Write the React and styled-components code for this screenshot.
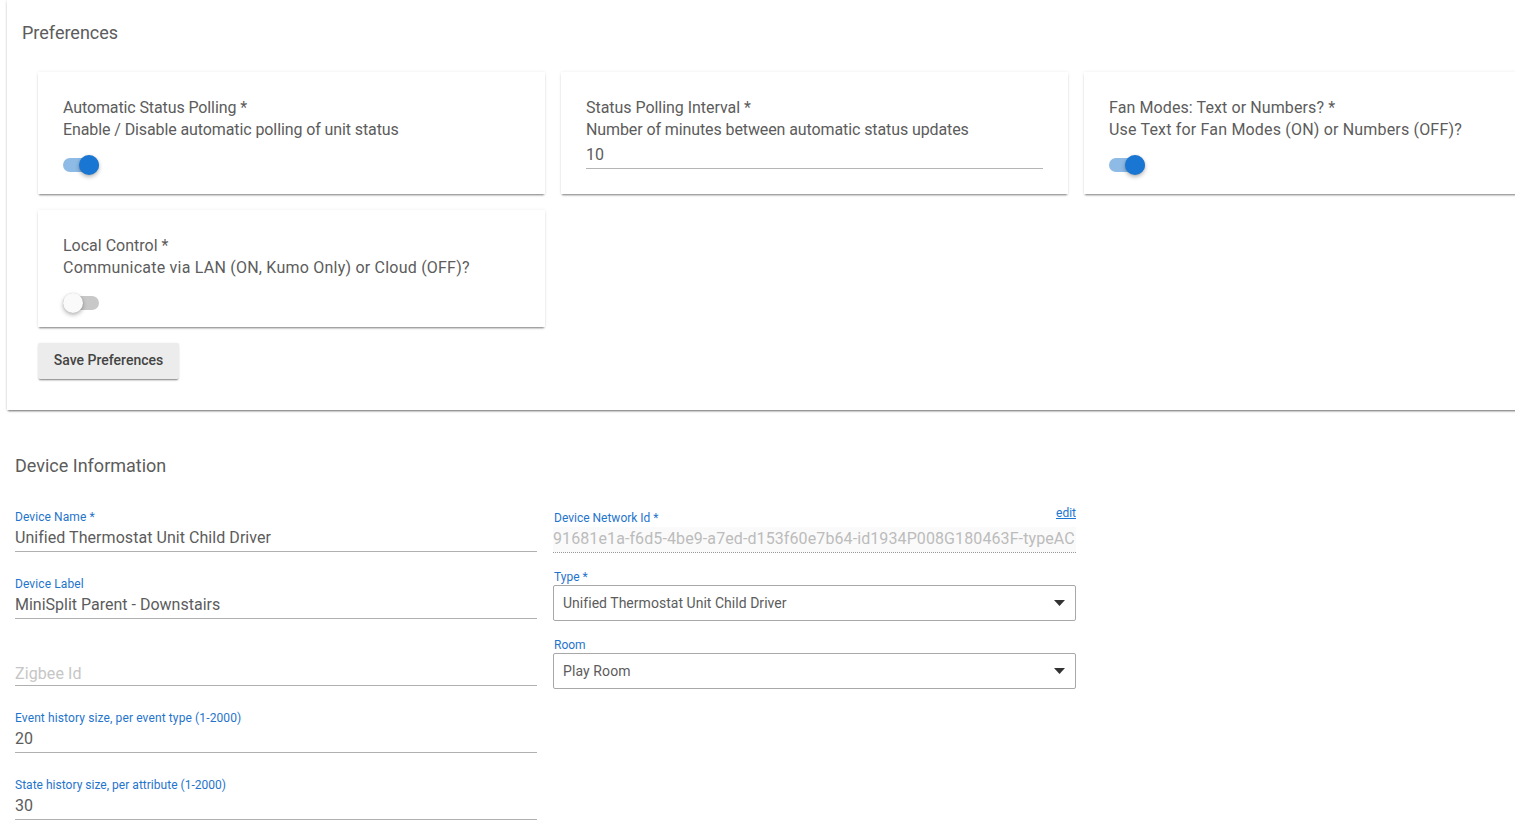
import styled, { createGlobalStyle } from 'styled-components';

const GlobalStyle = createGlobalStyle`
  html, body {
    margin: 0;
    height: 835px;
    overflow: hidden;
    background: #fff;
    font-family: Roboto, "Liberation Sans", Arial, sans-serif;
    color: #555;
  }
  * { box-sizing: border-box; }
`;

const Page = styled.div`
  width: 1515px;
  height: 835px;
  overflow: hidden;
`;

const PrefsPanel = styled.section`
  margin-left: 7px;
  width: 1520px;
  height: 410px;
  padding: 22px 0 0 15px;
  background: #fff;
  box-shadow: 0 2px 2px -1px rgba(0, 0, 0, 0.55), 0 0 3px rgba(0, 0, 0, 0.14);
`;

const PanelTitle = styled.h2`
  margin: 0;
  font-size: 18px;
  line-height: 22px;
  font-weight: 400;
  color: #5c5c5c;
`;

const PrefGrid = styled.div`
  display: grid;
  grid-template-columns: repeat(3, 507px);
  gap: 16px;
  margin: 28px 0 0 16px;
`;

const PrefCard = styled.div`
  height: ${({ $short }) => ($short ? '117px' : '122px')};
  padding: 25px 25px 0;
  background: #fff;
  box-shadow: 0 2px 2px -1px rgba(0, 0, 0, 0.5), 0 0 3px rgba(0, 0, 0, 0.08);
  font-size: 16px;
  line-height: 22px;
  color: #5c5c5c;
`;

const PrefLine = styled.div`
  height: 22px;
  white-space: nowrap;
  letter-spacing: ${({ $track }) => $track || 0}px;
`;

const SwitchTrack = styled.div`
  position: relative;
  width: 36px;
  height: 14px;
  margin-top: 17px;
  border-radius: 7px;
  background: ${({ $on }) => ($on ? '#8dbbe6' : '#c8c8c8')};
`;

const SwitchKnob = styled.div`
  position: absolute;
  top: -3px;
  left: ${({ $on }) => ($on ? '16px' : '0')};
  width: 20px;
  height: 20px;
  border-radius: 50%;
  background: ${({ $on }) => ($on ? '#1976d2' : '#fafafa')};
  box-shadow: 0 2px 4px rgba(0, 0, 0, 0.3), 0 0 1px rgba(0, 0, 0, 0.15);
`;

const IntervalValue = styled.div`
  height: 25px;
  margin-top: 3px;
  line-height: 22px;
  border-bottom: 1px solid #b5b5b5;
`;

const SaveButton = styled.button`
  display: block;
  width: 141px;
  height: 36px;
  margin: 16px 0 0 16px;
  padding: 0 0 2px;
  border: 0;
  border-radius: 2px;
  background: #ececec;
  box-shadow: 0 2px 2px -1px rgba(0, 0, 0, 0.5), 0 0 2px rgba(0, 0, 0, 0.08);
  font-family: inherit;
  font-size: 14px;
  font-weight: 500;
  color: #444;
`;

const DevicePanel = styled.section`
  padding: 45px 0 0 15px;
`;

const DeviceColumns = styled.div`
  display: grid;
  grid-template-columns: 522px 523px;
  column-gap: 16px;
  margin-top: 31px;
`;

const Column = styled.div`
  display: flex;
  flex-direction: column;
`;

const TextField = styled.div`
  height: 67px;
  padding-top: 2px;
  font-size: 16px;
`;

const FieldLabel = styled.div`
  height: ${({ $tall }) => ($tall ? '15px' : '14px')};
  padding-left: ${({ $inset }) => ($inset ? '1px' : '0')};
  font-size: 12px;
  line-height: 14px;
  color: #1f74cc;
  white-space: nowrap;
  letter-spacing: ${({ $track }) => $track || 0}px;
`;

const FieldValue = styled.div`
  height: 27px;
  padding-top: ${({ $placeholder }) => ($placeholder ? '5px' : '3px')};
  line-height: 20px;
  color: ${({ $placeholder }) => ($placeholder ? '#c6c6c6' : '#5c5c5c')};
  border-bottom: 1px solid #b0b0b0;
  white-space: nowrap;
  letter-spacing: ${({ $track }) => $track || 0}px;
`;

const NetworkField = styled.div`
  position: relative;
  height: 62px;
  padding-top: 3px;
`;

const EditLink = styled.a`
  position: absolute;
  top: -2px;
  right: 0;
  font-size: 12px;
  line-height: 14px;
  color: #1976d2;
  text-decoration: underline;
`;

const ReadOnlyValue = styled.div`
  height: 26px;
  margin-top: 2px;
  font-size: 16px;
  line-height: 24px;
  color: #bcbcbc;
  background: #fafafa;
  border-bottom: 1px dotted #9a9a9a;
  letter-spacing: 0.1px;
  white-space: nowrap;
  overflow: hidden;
`;

const SelectField = styled.div`
  height: 68px;
`;

const SelectBox = styled.div`
  display: flex;
  align-items: center;
  justify-content: space-between;
  height: 36px;
  margin-top: 1px;
  padding: 0 10px 0 9px;
  border: 1px solid #a8a8a8;
  border-radius: 2px;
  font-size: 14px;
  color: #5c5c5c;
  letter-spacing: ${({ $track }) => $track || 0}px;
`;

const Caret = styled.svg`
  width: 11px;
  height: 6px;
  fill: #333;
`;

const Toggle = ({ on }) => (
  <SwitchTrack $on={on}>
    <SwitchKnob $on={on} />
  </SwitchTrack>
);

const Select = ({ label, value, track }) => (
  <SelectField>
    <FieldLabel $inset>{label}</FieldLabel>
    <SelectBox $track={track}>
      {value}
      <Caret viewBox="0 0 11 6"><path d="M0 0h11L5.5 6z" /></Caret>
    </SelectBox>
  </SelectField>
);

const Field = ({ label, value, placeholder, labelTrack, valueTrack }) => (
  <TextField>
    <FieldLabel $tall $track={labelTrack}>{label}</FieldLabel>
    <FieldValue $placeholder={placeholder} $track={valueTrack}>{value}</FieldValue>
  </TextField>
);

export default function App() {
  return (
    <Page>
      <GlobalStyle />
      <PrefsPanel>
        <PanelTitle>Preferences</PanelTitle>
        <PrefGrid>
          <PrefCard>
            <PrefLine $track={-0.11}>Automatic Status Polling *</PrefLine>
            <PrefLine $track={-0.1}>Enable / Disable automatic polling of unit status</PrefLine>
            <Toggle on />
          </PrefCard>
          <PrefCard>
            <PrefLine $track={-0.04}>Status Polling Interval *</PrefLine>
            <PrefLine $track={-0.1}>Number of minutes between automatic status updates</PrefLine>
            <IntervalValue>10</IntervalValue>
          </PrefCard>
          <PrefCard>
            <PrefLine $track={0.1}>Fan Modes: Text or Numbers? *</PrefLine>
            <PrefLine $track={0.18}>Use Text for Fan Modes (ON) or Numbers (OFF)?</PrefLine>
            <Toggle on />
          </PrefCard>
          <PrefCard $short>
            <PrefLine>Local Control *</PrefLine>
            <PrefLine $track={0.22}>Communicate via LAN (ON, Kumo Only) or Cloud (OFF)?</PrefLine>
            <Toggle />
          </PrefCard>
        </PrefGrid>
        <SaveButton>Save Preferences</SaveButton>
      </PrefsPanel>
      <DevicePanel>
        <PanelTitle>Device Information</PanelTitle>
        <DeviceColumns>
          <Column>
            <Field label="Device Name *" labelTrack={0.08} value="Unified Thermostat Unit Child Driver" valueTrack={0.05} />
            <Field label="Device Label" labelTrack={0.1} value="MiniSplit Parent - Downstairs" />
            <Field label={'\u00a0'} value="Zigbee Id" placeholder valueTrack={0.1} />
            <Field label="Event history size, per event type (1-2000)" labelTrack={0.12} value="20" />
            <Field label="State history size, per attribute (1-2000)" labelTrack={0.02} value="30" />
          </Column>
          <Column>
            <NetworkField>
              <EditLink>edit</EditLink>
              <FieldLabel $inset>Device Network Id *</FieldLabel>
              <ReadOnlyValue>91681e1a-f6d5-4be9-a7ed-d153f60e7b64-id1934P008G180463F-typeAC</ReadOnlyValue>
            </NetworkField>
            <Select label="Type *" value="Unified Thermostat Unit Child Driver" track={0.03} />
            <Select label="Room" value="Play Room" track={0.1} />
          </Column>
        </DeviceColumns>
      </DevicePanel>
    </Page>
  );
}
